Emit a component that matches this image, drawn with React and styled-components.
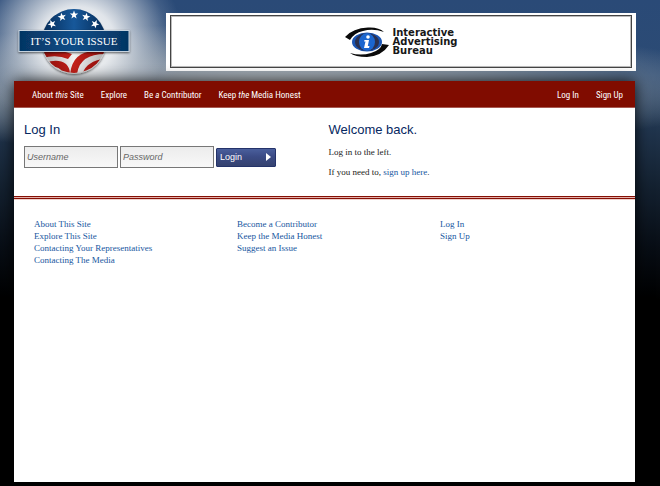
import React from "react";
import styled, { createGlobalStyle } from "styled-components";

const GlobalStyle = createGlobalStyle`
  *, *::before, *::after { box-sizing: border-box; }
  body {
    margin: 0;
    background: #000;
    font-family: "Liberation Serif", serif;
    font-size: 9px;
    color: #222;
  }
  a { text-decoration: none; }
`;

const Page = styled.div`
  display: flex;
  flex-direction: column;
  min-height: 100vh;
  padding: 0 25px 4px 14px;
  background:
    radial-gradient(ellipse 105px 95px at 78px 40px, #fafafa 0%, rgba(240, 242, 244, 0.92) 35%, rgba(205, 212, 221, 0.6) 62%, rgba(160, 175, 198, 0.2) 85%, rgba(140, 160, 190, 0) 100%),
    radial-gradient(ellipse 75% 64px at 40% 88px, rgba(200, 202, 202, 0.95) 0%, rgba(160, 168, 174, 0.7) 50%, rgba(120, 135, 155, 0) 100%),
    linear-gradient(#2a4a77 0px, #2c4b74 75px, #21364f 125px, #13202f 190px, #080e16 245px, #000 300px);
`;

const Header = styled.header`
  display: flex;
  align-items: flex-start;
  justify-content: space-between;
  gap: 32px;
  height: 81px;
`;

const LogoLink = styled.a`
  display: block;
  width: 120px;
  height: 81px;
  flex: none;
`;

const Ad = styled.a`
  display: flex;
  flex: 1;
  height: 58px;
  margin: 13px -1px 0 0;
  padding: 2px 4px 3px;
  background: #fff;
`;

const AdFrame = styled.span`
  display: flex;
  flex: 1;
  align-items: center;
  justify-content: center;
  gap: 4px;
  border: 1px solid #444;
  outline: 1px solid #bbb;
  outline-offset: -2px;
`;

const AdName = styled.span`
  color: #181818;
  font: bold 10px/9px "DejaVu Sans", sans-serif;
`;

const Sheet = styled.div`
  flex: 1;
  background: #fff;
  box-shadow: 0 0 14px rgba(0, 0, 0, 0.85);
`;

const Nav = styled.nav`
  display: flex;
  justify-content: space-between;
  align-items: center;
  height: 27px;
  padding: 2px 12px 0 18px;
  background: #800c00;
  border-bottom: 1px solid #a85a52;
`;

const NavGroup = styled.div`
  display: flex;
  gap: 17px;
`;

const NavLink = styled.a`
  color: #fff;
  font: 9px/14px "Roboto Condensed", "Lato", sans-serif;
`;

const Main = styled.main`
  display: grid;
  grid-template-columns: 1fr 1fr;
  height: 88px;
  padding: 0 2px 0 10px;
`;

const Column = styled.section`
  padding-top: 14px;
`;

const Title = styled.h2`
  margin: 0;
  color: #06285f;
  font: 13px/16px "Liberation Sans", sans-serif;
`;

const LoginForm = styled.form`
  display: flex;
  align-items: center;
  gap: 2px;
  margin-top: 8px;
`;

const Field = styled.input`
  width: 94px;
  height: 22px;
  padding: 0 2px;
  border: 1px solid #777;
  border-radius: 0;
  background: linear-gradient(#ececec, #f8f8f8);
  color: #333;
  font: italic 9px "Liberation Sans", sans-serif;
  &::placeholder { color: #666; opacity: 1; }
`;

const LoginButton = styled.button`
  display: flex;
  align-items: center;
  justify-content: space-between;
  width: 60px;
  height: 19px;
  padding: 0 4px 0 3px;
  border: 1px solid #24336a;
  border-radius: 1px;
  background: linear-gradient(#4a5f9c, #3b4b85 45%, #35426f);
  color: #fff;
  font: 9px "Liberation Sans", sans-serif;
`;

const Copy = styled.p`
  margin: 8px 0 0;
  font-size: 9px;
  line-height: 12px;
`;

const TextLink = styled.a`
  color: #1656a0;
`;

const Rule = styled.hr`
  height: 4px;
  margin: 0;
  border: 0;
  background: linear-gradient(#850f05 1px, #e3b0ab 1px 2px, #850f05 2px 3px, #f0d0cc 3px);
`;

const Footer = styled.footer`
  display: grid;
  grid-template-columns: repeat(3, 1fr);
  gap: 28px;
  padding: 18px 20px;
`;

const LinkList = styled.ul`
  margin: 0;
  padding: 0;
  list-style: none;
  font-size: 9px;
  line-height: 12px;
`;

const STAR = "M0-4.4 1.1-1.4 4.2-1.4 1.7.6 2.6 3.6 0 1.8-2.6 3.6-1.7.6-4.2-1.4-1.1-1.4Z";
const STARS = [[52, 24, -25], [62, 17, -12], [74, 15, 0], [86, 17, 12], [95, 24, 25]];

function Logo() {
  return (
    <svg viewBox="14 0 120 81" width="120" height="81" role="img" aria-label="It's Your Issue">
      <defs>
        <linearGradient id="disc" x1="0" x2="1">
          <stop offset="0" stopColor="#032853" />
          <stop offset=".5" stopColor="#17589a" />
          <stop offset="1" stopColor="#032853" />
        </linearGradient>
        <linearGradient id="ribbon" x1="0" x2="1">
          <stop offset="0" stopColor="#053563" />
          <stop offset=".5" stopColor="#0e4d87" />
          <stop offset="1" stopColor="#053563" />
        </linearGradient>
        <linearGradient id="stripe" gradientUnits="userSpaceOnUse" x1="43" x2="105" y1="0" y2="0">
          <stop offset="0" stopColor="#8d0f0c" />
          <stop offset=".5" stopColor="#c4211a" />
          <stop offset="1" stopColor="#8d0f0c" />
        </linearGradient>
        <linearGradient id="silver" x1="0" x2="1">
          <stop offset="0" stopColor="#a9a9a9" />
          <stop offset=".5" stopColor="#f1f1f1" />
          <stop offset="1" stopColor="#a9a9a9" />
        </linearGradient>
        <clipPath id="round"><circle cx="74" cy="41" r="32" /></clipPath>
        <filter id="drop" x="-20%" y="-20%" width="140%" height="140%">
          <feDropShadow dx="0" dy="1" stdDeviation="1.2" floodOpacity=".6" />
        </filter>
      </defs>
      <circle cx="74" cy="42" r="32" fill="#d4d5d6" filter="url(#drop)" />
      <g clipPath="url(#round)">
        <rect x="40" y="7" width="68" height="35" fill="url(#disc)" />
        <rect x="40" y="42" width="68" height="34" fill="url(#silver)" />
        <g fill="url(#stripe)">
          <path d="M40 51H60Q67 52 72 54L68 59Q57 54 42 58Z" />
          <path d="M45 63Q58 58 66 64 70 68 70 74L62 72Q60 66 48 67Z" />
          <path d="M70 75Q72 52 94 51H106L105 54Q79 54 77 75Z" />
          <path d="M82 75Q86 61 104 59L101 65Q91 67 88 75Z" />
        </g>
      </g>
      <g fill="#fff">
        {STARS.map(([x, y, turn]) => (
          <path key={x} d={STAR} transform={`translate(${x} ${y}) rotate(${turn})`} />
        ))}
      </g>
      <rect x="19" y="30.500" width="110" height="21" fill="url(#ribbon)" stroke="#c5d2de" filter="url(#drop)" />
      <text x="74" y="45" textAnchor="middle" fill="#fff" fontFamily="Liberation Serif, serif" fontSize="11">
        IT’S YOUR ISSUE
      </text>
    </svg>
  );
}

function Eye() {
  return (
    <svg viewBox="0 0 44 30" width="44" height="30" aria-hidden="true">
      <path d="M0 10Q8 1 23 .5 34 0 39 5 28 1 18 4 9 6 5 13Z" fill="#0a0a0a" />
      <path d="M44 18Q37 29 22 30 10 30 5 26 16 29 26 26 36 23 37 17Z" fill="#0a0a0a" />
      <ellipse cx="22" cy="15" rx="15" ry="9.500" fill="#1c56b4" />
      <ellipse cx="22" cy="15" rx="12" ry="9" fill="#2b3150" />
      <ellipse cx="22" cy="15" rx="8" ry="9" fill="#1b66cf" />
      <circle cx="23" cy="10" r="1.800" fill="#fff" />
      <path d="M19.500 13H24L22.800 19H24.500L24 21H19L20.500 14.500H19Z" fill="#fff" />
    </svg>
  );
}

const FOOTER_LINKS = [
  ["About This Site", "Explore This Site", "Contacting Your Representatives", "Contacting The Media"],
  ["Become a Contributor", "Keep the Media Honest", "Suggest an Issue"],
  ["Log In", "Sign Up"],
];

export default function App() {
  return (
    <>
      <GlobalStyle />
      <Page>
        <Header>
          <LogoLink href="#"><Logo /></LogoLink>
          <Ad href="#">
            <AdFrame>
              <Eye />
              <AdName>Interactive<br />Advertising<br />Bureau</AdName>
            </AdFrame>
          </Ad>
        </Header>
        <Sheet>
          <Nav>
            <NavGroup>
              <NavLink href="#">About <em>this</em> Site</NavLink>
              <NavLink href="#">Explore</NavLink>
              <NavLink href="#">Be <em>a</em> Contributor</NavLink>
              <NavLink href="#">Keep <em>the</em> Media Honest</NavLink>
            </NavGroup>
            <NavGroup>
              <NavLink href="#">Log In</NavLink>
              <NavLink href="#">Sign Up</NavLink>
            </NavGroup>
          </Nav>
          <Main>
            <Column>
              <Title>Log In</Title>
              <LoginForm onSubmit={(event) => event.preventDefault()}>
                <Field type="text" placeholder="Username" aria-label="Username" />
                <Field type="password" placeholder="Password" aria-label="Password" />
                <LoginButton type="submit">
                  Login
                  <svg viewBox="0 0 5 8" width="5" height="8" aria-hidden="true">
                    <path d="M0 0 5 4 0 8Z" fill="#fff" />
                  </svg>
                </LoginButton>
              </LoginForm>
            </Column>
            <Column>
              <Title>Welcome back.</Title>
              <Copy>Log in to the left.</Copy>
              <Copy>If you need to, <TextLink href="#">sign up here</TextLink>.</Copy>
            </Column>
          </Main>
          <Rule />
          <Footer>
            {FOOTER_LINKS.map((links) => (
              <LinkList key={links[0]}>
                {links.map((label) => (
                  <li key={label}><TextLink href="#">{label}</TextLink></li>
                ))}
              </LinkList>
            ))}
          </Footer>
        </Sheet>
      </Page>
    </>
  );
}
